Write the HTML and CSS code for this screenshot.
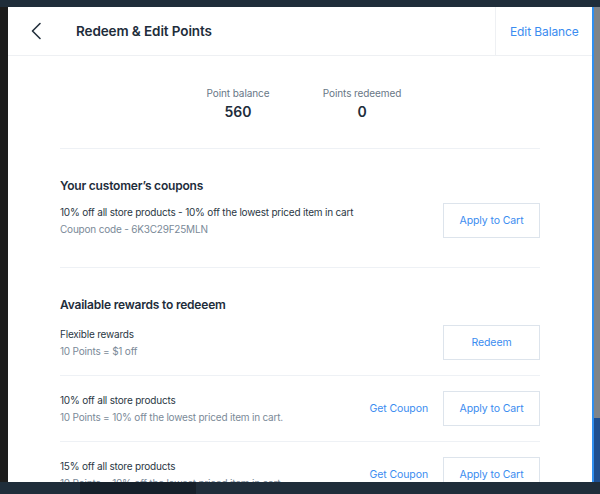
FILE: index.html
```html
<!DOCTYPE html>
<html lang="en">
<head>
<meta charset="utf-8">
<title>Redeem &amp; Edit Points</title>
<link rel="stylesheet" href="styles.css">
</head>
<body>
<div class="screen">
  <div class="topbar"></div>
  <div class="leftstrip"></div>
  <main class="modal">
    <header class="modal-header">
      <button class="back" aria-label="Back">
        <svg width="12" height="18" viewBox="0 0 12 18"><path d="M10 1.5 L2.5 9 L10 16.5" fill="none" stroke="#24313d" stroke-width="1.6" stroke-linecap="round" stroke-linejoin="round"/></svg>
      </button>
      <h1 class="title">Redeem &amp; Edit Points</h1>
      <a class="edit-balance">Edit Balance</a>
    </header>
    <div class="body">
      <section class="stats">
        <div class="stat">
          <div class="stat-label">Point balance</div>
          <div class="stat-value">560</div>
        </div>
        <div class="stat">
          <div class="stat-label">Points redeemed</div>
          <div class="stat-value">0</div>
        </div>
      </section>
      <section class="section coupons">
        <h2 class="section-title">Your customer’s coupons</h2>
        <div class="row first">
          <div class="row-text">
            <div class="row-name">10% off all store products - 10% off the lowest priced item in cart</div>
            <div class="row-sub">Coupon code - 6K3C29F25MLN</div>
          </div>
          <button class="btn">Apply to Cart</button>
        </div>
      </section>
      <section class="section rewards">
        <h2 class="section-title">Available rewards to redeeem</h2>
        <div class="row first">
          <div class="row-text">
            <div class="row-name">Flexible rewards</div>
            <div class="row-sub">10 Points = $1 off</div>
          </div>
          <button class="btn">Redeem</button>
        </div>
        <div class="row">
          <div class="row-text">
            <div class="row-name">10% off all store products</div>
            <div class="row-sub">10 Points = 10% off the lowest priced item in cart.</div>
          </div>
          <a class="link">Get Coupon</a>
          <button class="btn">Apply to Cart</button>
        </div>
        <div class="row">
          <div class="row-text">
            <div class="row-name">15% off all store products</div>
            <div class="row-sub">10 Points = 10% off the lowest priced item in cart.</div>
          </div>
          <a class="link">Get Coupon</a>
          <button class="btn">Apply to Cart</button>
        </div>
      </section>
    </div>
  </main>
  <div class="scrollbar"><div class="thumb"></div></div>
  <div class="bottombar"><div class="bottom-seg"></div></div>
</div>
</body>
</html>
```
FILE: styles.css
```css
* { box-sizing: border-box; }
html, body { margin: 0; padding: 0; }
body {
  width: 600px;
  height: 494px;
  overflow: hidden;
  background: #1c1c1c;
  font-family: "Inter", "Noto Sans", sans-serif;
  color: #20303c;
}
.screen {
  display: grid;
  grid-template-columns: 8px 584px 8px;
  grid-template-rows: 7px 475px 12px;
  width: 600px;
  height: 494px;
}
.topbar { grid-column: 1 / 4; grid-row: 1; background: #1f2d3a; }
.leftstrip { grid-column: 1; grid-row: 2; background: #1c1c1c; }
.bottombar {
  grid-column: 1 / 4; grid-row: 3; background: #1f2d3a;
  display: flex; padding-left: 80px;
}
.bottom-seg { width: 116px; background: #16202a; }
.scrollbar {
  grid-column: 3; grid-row: 2;
  background: #7f8488;
  border-left: 2px solid #2f8ff0;
  display: flex; flex-direction: column; justify-content: flex-end;
}
.thumb { height: 64px; background: #1e4f90; }
.modal {
  grid-column: 2; grid-row: 2;
  background: #fff;
  overflow: hidden;
  display: flex; flex-direction: column;
}
.modal-header {
  height: 49px;
  flex: none;
  display: flex; align-items: center;
  border-bottom: 1px solid #eef0f3;
}
.back {
  border: 0; background: none; padding: 0;
  margin-left: 22px; width: 14px; height: 18px;
  display: flex; align-items: center;
}
.title {
  margin: 0 0 0 32px;
  font-size: 13.5px; font-weight: 600;
  color: #1e2d3b;
  flex: 1;
  letter-spacing: -0.1px;
}
.edit-balance {
  align-self: stretch;
  display: flex; align-items: center;
  padding-left: 14px;
  border-left: 1px solid #eef0f3;
  color: #3b8cf0;
  font-size: 12px;
  width: 97px;
  white-space: nowrap;
  letter-spacing: -0.1px;
}
.body { padding: 0 52px; }
.stats {
  display: flex; justify-content: center; gap: 40px;
  padding: 30px 0 26px;
  border-bottom: 1px solid #eef1f5;
}
.stat { display: flex; flex-direction: column; align-items: center; width: 84px; }
.stat-label { font-size: 10px; color: #687786; line-height: 14px; letter-spacing: -0.1px; }
.stat-value { font-size: 14px; font-weight: 600; color: #1e2d3b; line-height: 20px; margin-top: 2px; }
.section-title {
  margin: 0; font-size: 12px; font-weight: 600; color: #1e2d3b;
  line-height: 16px; letter-spacing: -0.2px;
}
.coupons { padding-top: 29px; padding-bottom: 29px; border-bottom: 1px solid #eef1f5; }
.rewards { padding-top: 29px; }
.row {
  display: flex; align-items: center;
  height: 66px;
  border-top: 1px solid #eef1f5;
}
.row.first { border-top: 0; height: 35px; }
.coupons .row.first { margin-top: 9px; }
.rewards .row.first { margin-top: 12px; margin-bottom: 15px; }
.row-text { flex: 1; min-width: 0; }
.row-name { font-size: 10px; color: #2a3744; line-height: 14px; letter-spacing: -0.2px; }
.row-sub { font-size: 10px; color: #7b8a98; line-height: 14px; margin-top: 3px; letter-spacing: -0.2px; }
.link { color: #3b8cf0; font-size: 10.5px; margin-right: 15px; letter-spacing: -0.1px; }
.btn {
  width: 97px; height: 35px; flex: none;
  background: #fff;
  border: 1px solid #dde4ec;
  color: #3b8cf0;
  font-family: inherit; font-size: 10.5px;
  letter-spacing: -0.1px;
  padding: 0;
}
```
